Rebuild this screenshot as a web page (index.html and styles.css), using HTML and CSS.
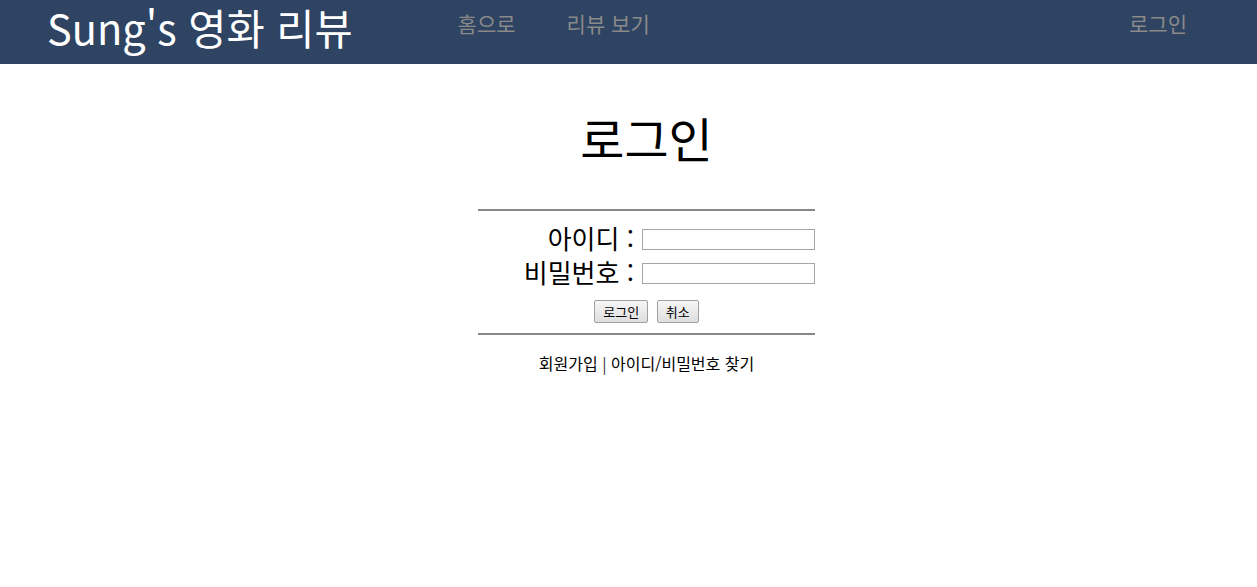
FILE: index.html
```html
<!DOCTYPE html>
<html lang="ko">
<head>
<meta charset="utf-8">
<title>로그인</title>
<link rel="stylesheet" href="styles.css">
</head>
<body>
<header class="topbar">
  <div class="brand">Sung's 영화 리뷰</div>
  <nav class="nav">
    <a class="nav-link" href="#">홈으로</a>
    <a class="nav-link" href="#">리뷰 보기</a>
  </nav>
  <a class="nav-link login-link" href="#">로그인</a>
</header>
<main class="content">
  <h1 class="page-title">로그인</h1>
  <form class="login-form">
    <table class="login-table">
      <tr class="first-row">
        <td class="label">아이디 :</td>
        <td class="input-cell"><input class="field" type="text"></td>
      </tr>
      <tr>
        <td class="label">비밀번호 :</td>
        <td class="input-cell"><input class="field" type="password"></td>
      </tr>
      <tr>
        <td colspan="2" class="actions">
          <button type="button" class="btn">로그인</button>
          <button type="button" class="btn">취소</button>
        </td>
      </tr>
    </table>
  </form>
  <div class="links">
    <a href="#">회원가입</a> <span class="sep">|</span> <a href="#">아이디/비밀번호 찾기</a>
  </div>
</main>
</body>
</html>
```
FILE: styles.css
```css
* { box-sizing: border-box; }
body {
  margin: 0;
  font-family: "Noto Sans CJK KR", "Noto Sans", sans-serif;
  background: #fff;
  color: #000;
}
.topbar {
  height: 64px;
  background: #2e4462;
  display: flex;
  align-items: center;
  padding: 0 70px 0 47px;
}
.brand {
  color: #fff;
  font-size: 41.5px;
  line-height: 1.2;
  margin-top: -8px;
  margin-right: 105px;
  flex: none;
  white-space: nowrap;
}
.nav {
  display: flex;
  gap: 51px;
  flex: 1;
  margin-top: -16px;
}
.nav-link {
  color: #8a8a8a;
  font-size: 21px;
  text-decoration: none;
  line-height: 1.2;
}
.login-link { margin-top: -16px; }
.content {
  display: flex;
  flex-direction: column;
  align-items: center;
  padding-left: 36px;
}
.page-title {
  font-size: 48px;
  font-weight: normal;
  margin: 45px 0 0;
  line-height: 1.2;
}
.login-form { margin-top: 42px; }
.login-table {
  border-collapse: collapse;
  border-top: 2px solid #888;
  border-bottom: 2px solid #888;
  width: 337px;
}
.login-table td { padding: 2px 0; }
.first-row td { padding-top: 12px; }
.input-cell { width: 1px; }
.label {
  text-align: right;
  font-size: 26px;
  line-height: 30px;
  padding-right: 8px !important;
  white-space: nowrap;
}
.field {
  width: 173px;
  height: 21px;
  border: 1px solid #a5a5a5;
  padding: 0;
  vertical-align: middle;
}
.actions {
  text-align: center;
  padding: 8px 0 10px !important;
}
.btn {
  font-family: "Noto Sans CJK KR", sans-serif;
  font-size: 13px;
  height: 23px;
  padding: 0 8px;
  margin: 0 2px;
  background: linear-gradient(#f6f6f6, #dedede);
  border: 1px solid #a0a0a0;
  border-radius: 2px;
  vertical-align: middle;
}
.links {
  margin-top: 16px;
  font-size: 16px;
}
.links a { color: #000; text-decoration: none; }
.sep { color: #333; }
```
